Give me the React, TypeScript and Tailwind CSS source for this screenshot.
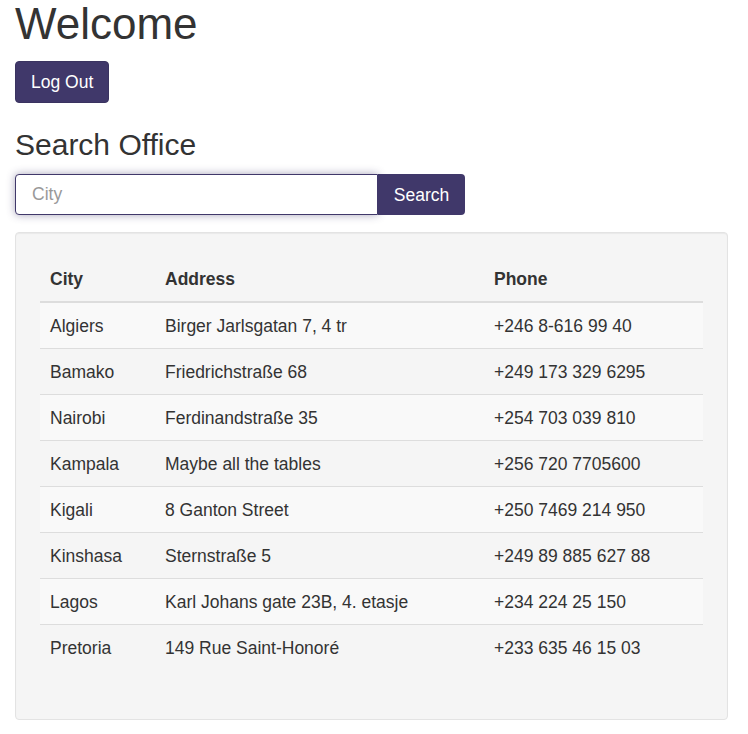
const offices = [
  { city: "Algiers", address: "Birger Jarlsgatan 7, 4 tr", phone: "+246 8-616 99 40" },
  { city: "Bamako", address: "Friedrichstraße 68", phone: "+249 173 329 6295" },
  { city: "Nairobi", address: "Ferdinandstraße 35", phone: "+254 703 039 810" },
  { city: "Kampala", address: "Maybe all the tables", phone: "+256 720 7705600" },
  { city: "Kigali", address: "8 Ganton Street", phone: "+250 7469 214 950" },
  { city: "Kinshasa", address: "Sternstraße 5", phone: "+249 89 885 627 88" },
  { city: "Lagos", address: "Karl Johans gate 23B, 4. etasje", phone: "+234 224 25 150" },
  { city: "Pretoria", address: "149 Rue Saint-Honoré", phone: "+233 635 46 15 03" },
];

function OfficeTable() {
  return (
    <div className="w-full mb-[25px]">
      <div className="grid grid-cols-[115px_329px_1fr] h-[46px] items-center border-b-2 border-[#ddd] font-bold">
        <div className="px-[10px]">City</div>
        <div className="px-[10px]">Address</div>
        <div className="px-[10px]">Phone</div>
      </div>
      {offices.map((o, i) => (
        <div
          key={o.city}
          className={
            "grid grid-cols-[115px_329px_1fr] items-center " +
            (i === 0 ? "h-[45px] " : "h-[46px] border-t border-[#ddd] ") +
            (i % 2 === 0 ? "bg-[#f9f9f9]" : "")
          }
        >
          <div className="px-[10px]">{o.city}</div>
          <div className="px-[10px]">{o.address}</div>
          <div className="px-[10px]">{o.phone}</div>
        </div>
      ))}
    </div>
  );
}

export default function App() {
  return (
    <div className="min-h-screen bg-white px-[15px] text-[#333] text-[17.5px] font-['Liberation_Sans',Arial,sans-serif]">
      <h1 className="m-0 text-[44px] leading-[1.1] font-normal">Welcome</h1>
      <button className="mt-[13px] h-[42px] px-[15px] rounded-[4px] bg-[#40386a] text-white text-[17.5px] border border-[#3a3360]">
        Log Out
      </button>

      <h2 className="mt-[25px] text-[30px] leading-[1.1] font-normal">Search Office</h2>
      <div className="mt-[13px] flex w-[450px] h-[41px]">
        <input
          placeholder="City"
          className="flex-1 min-w-0 h-full px-[16px] rounded-l-[4px] border border-[#40386a] bg-white outline-none text-[17.5px] placeholder:text-[#999] shadow-[0_0_8px_rgba(64,56,106,0.45)]"
        />
        <button className="h-full w-[87px] rounded-r-[4px] bg-[#40386a] text-white text-[17.5px]">
          Search
        </button>
      </div>

      <div className="mt-[17px] w-[713px] p-6 bg-[#f5f5f5] border border-[#e3e3e3] rounded-[4px] shadow-[inset_0_1px_1px_rgba(0,0,0,0.05)]">
        <OfficeTable />
      </div>
    </div>
  );
}
